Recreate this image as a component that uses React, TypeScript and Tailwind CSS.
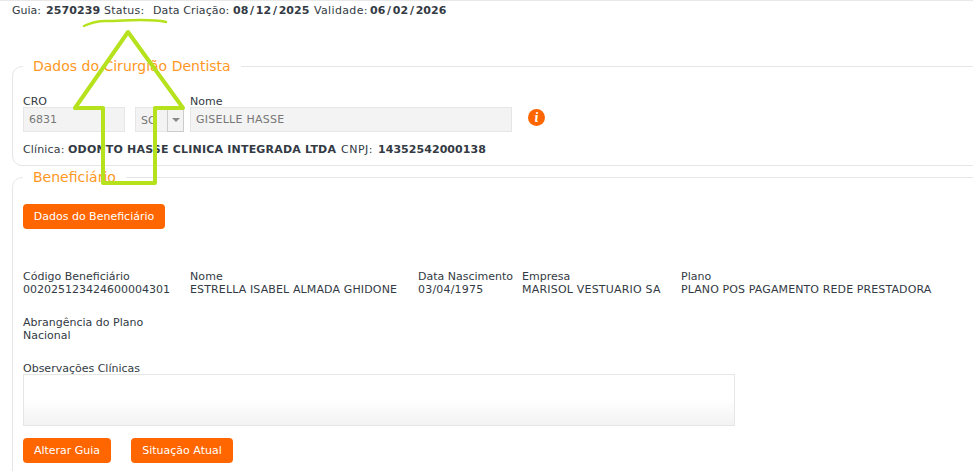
const Dt = ({ v }: { v: string }) => (
  <b>
    {v.split("/").map((p, i) => (
      <span key={p + i}>
        {i > 0 && <span className="px-[1.75px]">/</span>}
        {p}
      </span>
    ))}
  </b>
);

export default function App() {
  const label = "text-[11px] leading-[13px]";
  const btn = "h-[25px] rounded-[4px] bg-[#ff6600] pt-[1px] text-[11px] text-white";
  const legend = "px-[10px] text-[14px] leading-[18px] text-[#ff981f]";
  const input = "border border-[#e6e6e6] bg-[#f3f3f3] pt-[2px] text-[11px] text-[#777]";
  return (
    <div className="relative h-[471px] w-[973px] overflow-hidden border-t border-[#e8e8e8] bg-white text-[#333a44]" style={{ fontFamily: '"DejaVu Sans", Verdana, sans-serif' }}>
      <div className="flex pl-3 pt-[3px] text-[11px] leading-[14px] whitespace-pre">
        <span className="w-[34px]">Guia:</span>
        <b className="w-[58px] tracking-[0.1px]">2570239</b>
        <span className="w-[49px] tracking-[0.25px]">Status:</span>
        <span className="w-[80px] tracking-[0.1px]">Data Criação:</span>
        <span className="w-[81px]"><Dt v="08/12/2025" /></span>
        <span className="w-[56px] tracking-[0.35px]">Validade:</span>
        <Dt v="06/02/2026" />
      </div>
      <fieldset className="ml-3 mr-[-20px] mt-[39px] h-[109px] rounded-[10px] border border-[#e6e6e6] pl-[10px]">
        <legend className={legend}>Dados do Cirurgião Dentista</legend>
        <div className="mt-[20px] flex items-start">
          <div className="w-[112px]">
            <div className={label}>CRO</div>
            <div className={`-mt-[1px] flex h-[25px] w-[102px] items-center pl-[5px] ${input}`}>6831</div>
          </div>
          <div className="w-[55px] pt-[12px]">
            <div className={`flex h-[25px] w-[49px] ${input}`}>
              <div className="flex-1 pl-[5px] leading-[21px]">SC</div>
              <div className="-m-[1px] -mt-[3px] flex w-[17px] items-center justify-center border border-[#ccc] bg-[#f3f3f3]">
                <div className="h-0 w-0 border-x-[4px] border-t-[4px] border-x-transparent border-t-[#888]" />
              </div>
            </div>
          </div>
          <div>
            <div className={label}>Nome</div>
            <div className={`-mt-[1px] flex h-[25px] w-[322px] items-center pl-[5px] tracking-[0.25px] ${input}`}>GISELLE HASSE</div>
          </div>
          <div className="ml-[16px] mt-[14px] flex h-[17px] w-[17px] items-center justify-center rounded-full bg-[#ff6600] font-serif text-[13px] font-bold italic leading-none text-white">i</div>
        </div>
        <div className="mt-[11px] flex text-[11px] leading-[14px] whitespace-pre">
          <span className="w-[45px] tracking-[0.15px]">Clínica:</span>
          <b className="w-[273px] tracking-[0.2px]">ODONTO HASSE CLINICA INTEGRADA LTDA</b>
          <span className="w-[37px] tracking-[0.5px]">CNPJ:</span>
          <b className="tracking-[0.05px]">14352542000138</b>
        </div>
      </fieldset>
      <fieldset className="ml-3 mr-[-20px] mt-[2px] h-[320px] rounded-[10px] border border-[#e6e6e6] pl-[10px]">
        <legend className={legend}>Beneficiário</legend>
        <button className={`mt-[18px] block w-[142px] ${btn}`}>Dados do Beneficiário</button>
        <div className="mt-[41px] flex">
          <div className={`w-[167px] ${label}`}>Código Beneficiário<br />002025123424600004301</div>
          <div className={`w-[228px] ${label} tracking-[0.13px]`}>Nome<br />ESTRELLA ISABEL ALMADA GHIDONE</div>
          <div className={`w-[104px] ${label}`}>Data Nascimento<br /><span className="tracking-[0.2px]">03/04/1975</span></div>
          <div className={`w-[159px] ${label}`}>Empresa<br /><span className="tracking-[0.2px]">MARISOL VESTUARIO SA</span></div>
          <div className={label}>Plano<br /><span className="tracking-[0.11px]">PLANO POS PAGAMENTO REDE PRESTADORA</span></div>
        </div>
        <div className={`mt-[20px] ${label}`}>Abrangência do Plano<br />Nacional</div>
        <div className={`mt-[20px] ${label}`}>Observações Clínicas</div>
        <div className="-mt-[1px] h-[52px] w-[712px] border border-[#e6e6e6] bg-gradient-to-b from-white from-50% to-[#f2f2f2]" />
        <div className="mt-[12px] flex gap-[20px]">
          <button className={`w-[88px] ${btn}`}>Alterar Guia</button>
          <button className={`w-[102px] ${btn}`}>Situação Atual</button>
        </div>
      </fieldset>
      <svg className="pointer-events-none absolute left-0 top-0" width="973" height="471" fill="none" stroke="#b5e21d" strokeLinejoin="round" strokeLinecap="round">
        <path d="M84 25C90 22 98 20 106 20C125 20 148 17 166 21" strokeWidth="2.5" />
        <path d="M128 31L75 107H103V182H155V107H183L128 31Z" strokeWidth="4" />
      </svg>
    </div>
  );
}
